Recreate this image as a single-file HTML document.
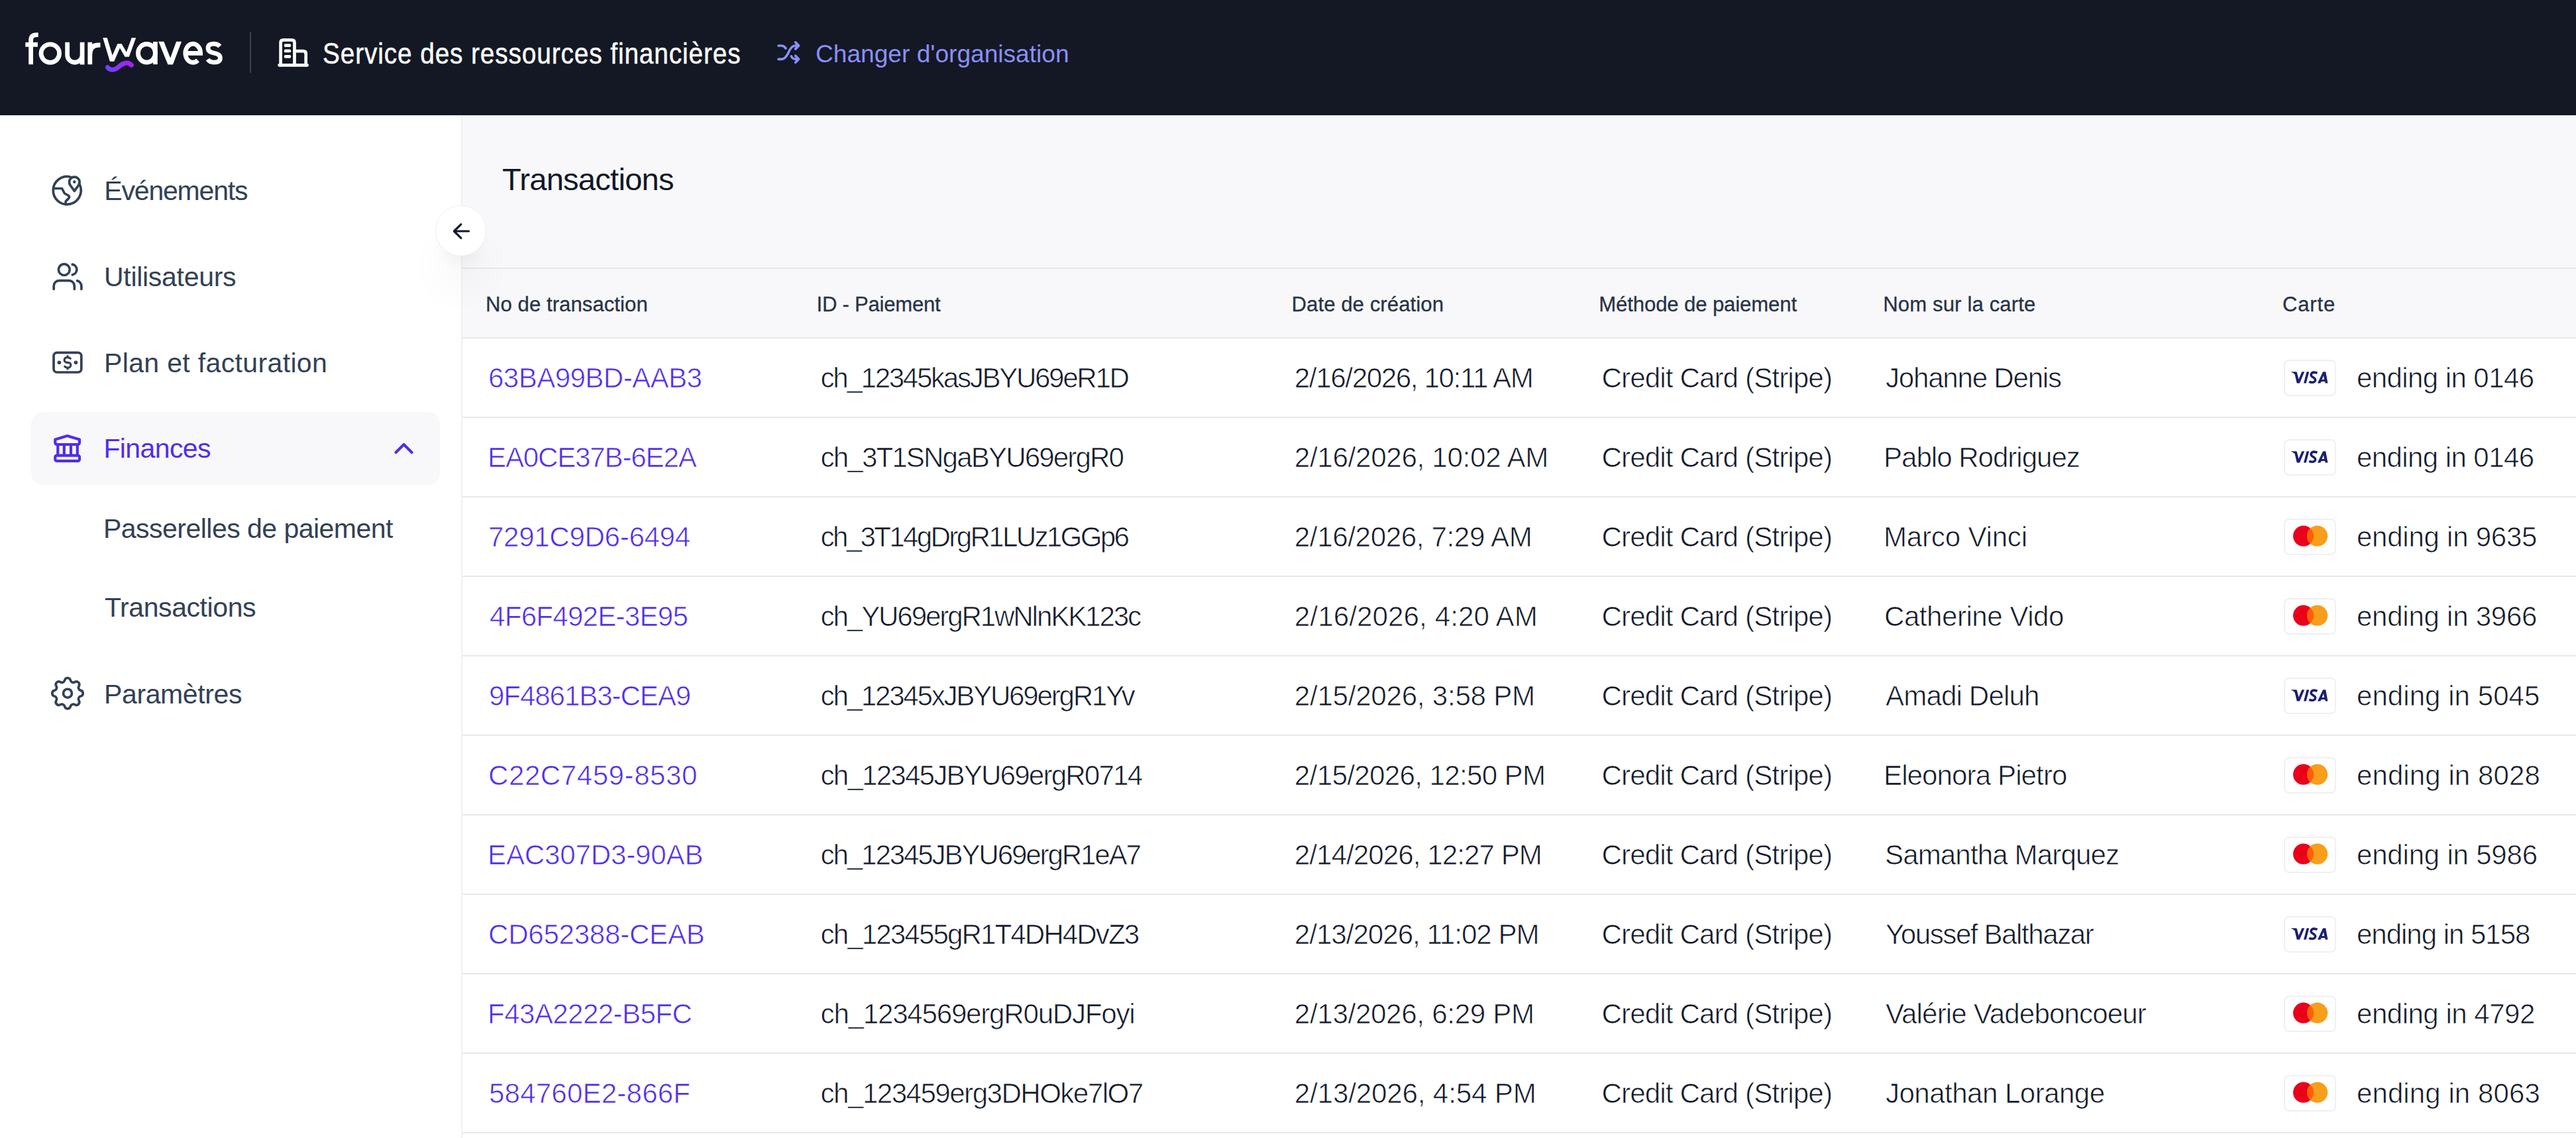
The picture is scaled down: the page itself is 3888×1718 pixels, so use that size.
<!DOCTYPE html>
<html lang="fr">
<head>
<meta charset="utf-8">
<title>Transactions - fourwaves</title>
<style>
html,body{margin:0;padding:0;}
body{width:3888px;height:1718px;position:relative;overflow:hidden;background:#f8f8fa;font-family:"Liberation Sans",sans-serif;}
.t{position:absolute;white-space:nowrap;font-family:"Liberation Sans",sans-serif;}
#hdr{position:absolute;left:0;top:0;width:3888px;height:174px;background:#131824;}
#side{position:absolute;left:0;top:174px;width:696px;height:1544px;background:#ffffff;}
#sideb{position:absolute;left:696px;top:174px;width:2px;height:1544px;background:#eef0f4;}
#active{position:absolute;left:47px;top:622px;width:617px;height:110px;border-radius:18px;background:#f8f8fa;}
#rows{position:absolute;left:698px;top:511px;width:3190px;height:1207px;background:#ffffff;}
.hl{position:absolute;left:698px;width:3190px;height:2px;background:#e6e8ec;}
.badge{position:absolute;left:3447px;width:79px;height:55px;box-sizing:border-box;border:2px solid #eef0f3;border-radius:8px;background:#fff;}
.badge svg{position:absolute;left:-2px;top:-2px;}
#collapse{position:absolute;left:657px;top:310px;width:77px;height:77px;box-sizing:border-box;border-radius:50%;background:#fff;border:1.5px solid #eceef1;box-shadow:0 54px 67px -13px rgba(0,0,0,0.07), 0 22px 27px -16px rgba(0,0,0,0.07);}
#ov{position:absolute;left:0;top:0;}
</style>
</head>
<body>
<div id="hdr"></div>
<div id="side"></div>
<div id="sideb"></div>
<div id="active"></div>
<div id="rows"></div>
<div class="hl" style="top:404px"></div>
<div class="hl" style="top:509px"></div>
<div class="hl" style="top:629px"></div>
<div class="hl" style="top:749px"></div>
<div class="hl" style="top:869px"></div>
<div class="hl" style="top:989px"></div>
<div class="hl" style="top:1109px"></div>
<div class="hl" style="top:1229px"></div>
<div class="hl" style="top:1349px"></div>
<div class="hl" style="top:1469px"></div>
<div class="hl" style="top:1589px"></div>
<div class="hl" style="top:1709px"></div>
<div class="badge" style="top:543px"><svg width="79" height="55" viewBox="0 0 79 55"><g fill="#1a1f71"><path d="M10.4 18.2 H18.6 Q19.6 18.3 19.9 19.6 L22.4 29.6 L27.3 18.2 H31.2 L23.9 35.6 H19.7 L16.6 22.2 Q14.5 19.6 10.4 18.2Z"/><path d="M34.5 18.2 H38.2 L33.7 35.6 H30Z"/><path fill-rule="evenodd" d="M59.1 18.2 H63.2 L66.4 35.6 H62.6 L62.1 32.9 H56.7 L55.2 35.6 H50.9Z M57.5 30 L60 23.9 L61 30Z"/></g><path d="M50.4 20.4 C48.6 19.3 47.3 19.1 45.9 19.1 C42.9 19.1 41.1 20.7 41.1 22.9 C41.1 26.6 47.6 26.9 47.6 30.5 C47.6 33 45.3 34.3 42.6 34.3 C40.8 34.3 39.3 33.7 38.3 33" stroke="#1a1f71" stroke-width="3.6" fill="none"/></svg></div>
<div class="badge" style="top:663px"><svg width="79" height="55" viewBox="0 0 79 55"><g fill="#1a1f71"><path d="M10.4 18.2 H18.6 Q19.6 18.3 19.9 19.6 L22.4 29.6 L27.3 18.2 H31.2 L23.9 35.6 H19.7 L16.6 22.2 Q14.5 19.6 10.4 18.2Z"/><path d="M34.5 18.2 H38.2 L33.7 35.6 H30Z"/><path fill-rule="evenodd" d="M59.1 18.2 H63.2 L66.4 35.6 H62.6 L62.1 32.9 H56.7 L55.2 35.6 H50.9Z M57.5 30 L60 23.9 L61 30Z"/></g><path d="M50.4 20.4 C48.6 19.3 47.3 19.1 45.9 19.1 C42.9 19.1 41.1 20.7 41.1 22.9 C41.1 26.6 47.6 26.9 47.6 30.5 C47.6 33 45.3 34.3 42.6 34.3 C40.8 34.3 39.3 33.7 38.3 33" stroke="#1a1f71" stroke-width="3.6" fill="none"/></svg></div>
<div class="badge" style="top:783px"><svg width="79" height="55" viewBox="0 0 79 55"><circle cx="29.6" cy="26.2" r="15.6" fill="#eb001b"/><circle cx="50.6" cy="26.2" r="15.6" fill="#f79e1b"/><path d="M40.1 14.66 A15.6 15.6 0 0 1 40.1 37.74 A15.6 15.6 0 0 1 40.1 14.66Z" fill="#ff5f00"/></svg></div>
<div class="badge" style="top:903px"><svg width="79" height="55" viewBox="0 0 79 55"><circle cx="29.6" cy="26.2" r="15.6" fill="#eb001b"/><circle cx="50.6" cy="26.2" r="15.6" fill="#f79e1b"/><path d="M40.1 14.66 A15.6 15.6 0 0 1 40.1 37.74 A15.6 15.6 0 0 1 40.1 14.66Z" fill="#ff5f00"/></svg></div>
<div class="badge" style="top:1023px"><svg width="79" height="55" viewBox="0 0 79 55"><g fill="#1a1f71"><path d="M10.4 18.2 H18.6 Q19.6 18.3 19.9 19.6 L22.4 29.6 L27.3 18.2 H31.2 L23.9 35.6 H19.7 L16.6 22.2 Q14.5 19.6 10.4 18.2Z"/><path d="M34.5 18.2 H38.2 L33.7 35.6 H30Z"/><path fill-rule="evenodd" d="M59.1 18.2 H63.2 L66.4 35.6 H62.6 L62.1 32.9 H56.7 L55.2 35.6 H50.9Z M57.5 30 L60 23.9 L61 30Z"/></g><path d="M50.4 20.4 C48.6 19.3 47.3 19.1 45.9 19.1 C42.9 19.1 41.1 20.7 41.1 22.9 C41.1 26.6 47.6 26.9 47.6 30.5 C47.6 33 45.3 34.3 42.6 34.3 C40.8 34.3 39.3 33.7 38.3 33" stroke="#1a1f71" stroke-width="3.6" fill="none"/></svg></div>
<div class="badge" style="top:1143px"><svg width="79" height="55" viewBox="0 0 79 55"><circle cx="29.6" cy="26.2" r="15.6" fill="#eb001b"/><circle cx="50.6" cy="26.2" r="15.6" fill="#f79e1b"/><path d="M40.1 14.66 A15.6 15.6 0 0 1 40.1 37.74 A15.6 15.6 0 0 1 40.1 14.66Z" fill="#ff5f00"/></svg></div>
<div class="badge" style="top:1263px"><svg width="79" height="55" viewBox="0 0 79 55"><circle cx="29.6" cy="26.2" r="15.6" fill="#eb001b"/><circle cx="50.6" cy="26.2" r="15.6" fill="#f79e1b"/><path d="M40.1 14.66 A15.6 15.6 0 0 1 40.1 37.74 A15.6 15.6 0 0 1 40.1 14.66Z" fill="#ff5f00"/></svg></div>
<div class="badge" style="top:1383px"><svg width="79" height="55" viewBox="0 0 79 55"><g fill="#1a1f71"><path d="M10.4 18.2 H18.6 Q19.6 18.3 19.9 19.6 L22.4 29.6 L27.3 18.2 H31.2 L23.9 35.6 H19.7 L16.6 22.2 Q14.5 19.6 10.4 18.2Z"/><path d="M34.5 18.2 H38.2 L33.7 35.6 H30Z"/><path fill-rule="evenodd" d="M59.1 18.2 H63.2 L66.4 35.6 H62.6 L62.1 32.9 H56.7 L55.2 35.6 H50.9Z M57.5 30 L60 23.9 L61 30Z"/></g><path d="M50.4 20.4 C48.6 19.3 47.3 19.1 45.9 19.1 C42.9 19.1 41.1 20.7 41.1 22.9 C41.1 26.6 47.6 26.9 47.6 30.5 C47.6 33 45.3 34.3 42.6 34.3 C40.8 34.3 39.3 33.7 38.3 33" stroke="#1a1f71" stroke-width="3.6" fill="none"/></svg></div>
<div class="badge" style="top:1503px"><svg width="79" height="55" viewBox="0 0 79 55"><circle cx="29.6" cy="26.2" r="15.6" fill="#eb001b"/><circle cx="50.6" cy="26.2" r="15.6" fill="#f79e1b"/><path d="M40.1 14.66 A15.6 15.6 0 0 1 40.1 37.74 A15.6 15.6 0 0 1 40.1 14.66Z" fill="#ff5f00"/></svg></div>
<div class="badge" style="top:1623px"><svg width="79" height="55" viewBox="0 0 79 55"><circle cx="29.6" cy="26.2" r="15.6" fill="#eb001b"/><circle cx="50.6" cy="26.2" r="15.6" fill="#f79e1b"/><path d="M40.1 14.66 A15.6 15.6 0 0 1 40.1 37.74 A15.6 15.6 0 0 1 40.1 14.66Z" fill="#ff5f00"/></svg></div>
<div id="collapse"></div>
<svg id="ov" width="3888" height="1718" viewBox="0 0 3888 1718" fill="none">
  <defs>
    <linearGradient id="wg" x1="160" y1="0" x2="200" y2="0" gradientUnits="userSpaceOnUse">
      <stop offset="0" stop-color="#6a44f7"/><stop offset="1" stop-color="#a81ff2"/>
    </linearGradient>
  </defs>
  <!-- logo -->
  <g stroke="#ffffff" stroke-width="6.8" fill="none">
    <path d="M46.6 97.2 V61 Q46.6 52.6 55 52.6 H57.7"/>
    <path d="M38.3 67.3 H57"/>
    <circle cx="75.8" cy="80.6" r="13.8"/>
    <path d="M101.65 63.7 V83 A11.22 11.22 0 0 0 124.1 83 V63.7 M124.1 83 V97.5"/>
    <path d="M135.8 97.2 V63.7 M135.8 82 Q135.8 68 149 68 H151.5"/>
    <ellipse cx="221.4" cy="80.3" rx="13" ry="13.8"/>
    <path d="M234.4 63 V97.2"/>
    <path d="M279.8 80.3 H302.6 A11.4 14 0 1 0 298.5 91"/>
    <path d="M331.8 70 Q328.5 66.1 322.8 66.1 Q314 66.1 314 72.8 Q314 78.3 322.5 80 Q332.4 81.8 332.4 87.5 Q332.4 94.1 323 94.1 Q316.5 94.1 313.6 89.5"/>
  </g>
  <g fill="#ffffff">
    <polygon points="155.2,57.1 161.7,57.1 172.3,92.5 165.8,92.5"/>
    <polygon points="165.8,92.5 172.3,92.5 183.7,66.3 177.3,66.3"/>
    <polygon points="177.3,66.3 183.7,66.3 194.9,85.4 188.4,85.4"/>
    <polygon points="188.4,85.4 194.9,85.4 205.2,57.1 198.7,57.1"/>
    <polygon points="239.3,62.7 247.3,62.7 260.9,97.2 253.3,97.2"/>
    <polygon points="266.1,62.7 274.1,62.7 261,97.2 253.5,97.2"/>
  </g>
  <path d="M162.5 101.7 C166 106.5 173 106.5 179 101 C185 95.5 193 92 198.3 98.3" stroke="url(#wg)" stroke-width="7" stroke-linecap="round"/>
  <!-- divider -->
  <rect x="377" y="48" width="2" height="62" fill="#394153"/>
  <!-- building icon -->
  <g stroke="#ffffff" stroke-width="4.7" stroke-linecap="round" stroke-linejoin="round">
    <path d="M423.6 98.4 V64.3 Q423.6 60.3 427.6 60.3 H440.5 Q444.5 60.3 444.5 64.3 V98.4"/>
    <path d="M444.5 77.1 H457.7 Q461.7 77.1 461.7 81.1 V98.4"/>
    <path d="M421.6 98.4 H463.6"/>
    <path d="M431 68.7 H437 M431 76.9 H437 M431 85.4 H437"/>
  </g>
  <!-- shuffle icon -->
  <g stroke="#8b8ff8" stroke-width="3.7" stroke-linecap="round" stroke-linejoin="round">
    <path d="M1175 69 H1179.5 Q1183.5 69 1186 73"/>
    <path d="M1175 89.3 H1179.5 Q1185 89.3 1189.5 80.5 Q1194 69 1200 69 H1204.5"/>
    <path d="M1194.3 85 Q1196.5 89.3 1201 89.3 H1204.5"/>
    <path d="M1200.6 63.9 L1205.5 68.9 L1200.6 73.9"/>
    <path d="M1200.6 84.3 L1205.5 89.3 L1200.6 94.3"/>
  </g>
  <!-- sidebar icons -->
  <g stroke="#334155" stroke-width="3.7" stroke-linecap="round" stroke-linejoin="round">
    <!-- globe pin -->
    <path d="M120.4 279 A21 21 0 1 1 106.4 267.2"/>
    <path d="M112.3 288.4 L105.96 279.54 A7.8 7.8 0 1 1 118.64 279.54 Z"/>
    <path d="M81.2 284.5 H93.5 L97.5 292 L103 295 Q105.5 296.8 103.8 299.2 L99.5 303.6 Q98.6 305 99.2 308.5"/>
    <!-- users -->
    <circle cx="96.8" cy="407.1" r="8.4"/>
    <path d="M81.2 436.4 V431.7 A8 8 0 0 1 89.2 423.7 H104.3 A8 8 0 0 1 112.3 431.7 V436.4"/>
    <path d="M109.2 399.2 A7.9 7.9 0 0 1 109.2 414.8"/>
    <path d="M116.5 423.9 A8.5 8.5 0 0 1 122.9 432 V436.4"/>
    <!-- money -->
    <rect x="81" y="532.3" width="41.8" height="29.7" rx="5" stroke-width="3.7"/>
    <path d="M106.3 541.3 Q104.8 539.6 102 539.6 H101 A3.85 3.85 0 0 0 101 547.3 H103 A3.85 3.85 0 0 1 103 555 H102 Q99.2 555 97.7 553.3 M102 537.6 V539.6 M102 555 V557" stroke-width="3.2"/>
    <!-- gear -->
    <path transform="translate(102 1046.7) scale(2.58) translate(-12 -12)" stroke-width="1.43" d="M10.325 4.317c.426 -1.756 2.924 -1.756 3.35 0a1.724 1.724 0 0 0 2.573 1.066c1.543 -.94 3.31 .826 2.37 2.37a1.724 1.724 0 0 0 1.065 2.572c1.756 .426 1.756 2.924 0 3.35a1.724 1.724 0 0 0 -1.066 2.573c.94 1.543 -.826 3.31 -2.37 2.37a1.724 1.724 0 0 0 -2.572 1.065c-.426 1.756 -2.924 1.756 -3.35 0a1.724 1.724 0 0 0 -2.573 -1.066c-1.543 .94 -3.31 -.826 -2.37 -2.37a1.724 1.724 0 0 0 -1.065 -2.572c-1.756 -.426 -1.756 -2.924 0 -3.35a1.724 1.724 0 0 0 1.066 -2.573c-.94 -1.543 .826 -3.31 2.37 -2.37c1 .608 2.296 .07 2.572 -1.065z"/>
    <circle cx="102" cy="1046.7" r="6.45"/>
  </g>
  <g fill="#334155">
    <circle cx="112.3" cy="274.6" r="2.3"/>
    <circle cx="89.4" cy="547.3" r="2.8"/>
    <circle cx="114.4" cy="547.3" r="2.8"/>
  </g>
  <!-- bank icon -->
  <g stroke="#502ded" stroke-width="4.2" stroke-linecap="round" stroke-linejoin="round">
    <path d="M83.3 663.5 L101.5 658 L120 663.5 V668 Q120 671 117 671 H86.3 Q83.3 671 83.3 668 Z"/>
    <path d="M87.3 671 V686.5 M96.8 671 V686.5 M107 671 V686.5 M116.8 671 V686.5"/>
    <rect x="83.3" y="687.6" width="36.7" height="8.3" rx="2.5"/>
    <path d="M597.5 683 L609.5 671 L621.5 683"/>
  </g>
  <!-- arrow in collapse button -->
  <g stroke="#111827" stroke-width="3.2" stroke-linecap="round" stroke-linejoin="round">
    <path d="M707.5 349 H685.5 M695.8 338.6 L685.3 349 L695.8 359.4"/>
  </g>
</svg>
<div class="t" style="left:487.24px;top:58.55px;font-size:44px;line-height:44px;letter-spacing:1.040px;color:#ffffff;font-weight:400;-webkit-text-stroke:0.5px #ffffff;transform:scaleX(0.88);transform-origin:0 0;">Service des ressources financières</div>
<div class="t" style="left:1231.00px;top:62.78px;font-size:37.0px;line-height:37.0px;letter-spacing:0.054px;color:#8b8ff8;font-weight:400;">Changer d'organisation</div>
<div class="t" style="left:157.30px;top:267.79px;font-size:41px;line-height:41px;letter-spacing:-1.189px;color:#334155;font-weight:400;">Événements</div>
<div class="t" style="left:157.00px;top:398.09px;font-size:41px;line-height:41px;letter-spacing:-0.298px;color:#334155;font-weight:400;">Utilisateurs</div>
<div class="t" style="left:157.00px;top:527.79px;font-size:41px;line-height:41px;letter-spacing:0.351px;color:#334155;font-weight:400;">Plan et facturation</div>
<div class="t" style="left:156.40px;top:657.49px;font-size:41px;line-height:41px;letter-spacing:-0.609px;color:#502ded;font-weight:400;">Finances</div>
<div class="t" style="left:156.00px;top:777.79px;font-size:41px;line-height:41px;letter-spacing:-0.527px;color:#334155;font-weight:400;">Passerelles de paiement</div>
<div class="t" style="left:158.00px;top:897.29px;font-size:41px;line-height:41px;letter-spacing:-0.426px;color:#334155;font-weight:400;">Transactions</div>
<div class="t" style="left:157.00px;top:1027.79px;font-size:41px;line-height:41px;letter-spacing:-0.379px;color:#334155;font-weight:400;">Paramètres</div>
<div class="t" style="left:758.00px;top:247.11px;font-size:47px;line-height:47px;letter-spacing:-0.710px;color:#111827;font-weight:400;">Transactions</div>
<div class="t" style="left:733.00px;top:444.46px;font-size:31px;line-height:31px;letter-spacing:0.104px;color:#273244;font-weight:400;-webkit-text-stroke:0.3px #273244;">No de transaction</div>
<div class="t" style="left:1232.50px;top:444.46px;font-size:31px;line-height:31px;letter-spacing:-0.200px;color:#273244;font-weight:400;-webkit-text-stroke:0.3px #273244;">ID - Paiement</div>
<div class="t" style="left:1949.50px;top:444.46px;font-size:31px;line-height:31px;letter-spacing:0.131px;color:#273244;font-weight:400;-webkit-text-stroke:0.3px #273244;">Date de création</div>
<div class="t" style="left:2413.30px;top:444.46px;font-size:31px;line-height:31px;letter-spacing:-0.064px;color:#273244;font-weight:400;-webkit-text-stroke:0.3px #273244;">Méthode de paiement</div>
<div class="t" style="left:2842.30px;top:444.46px;font-size:31px;line-height:31px;letter-spacing:0.169px;color:#273244;font-weight:400;-webkit-text-stroke:0.3px #273244;">Nom sur la carte</div>
<div class="t" style="left:3444.90px;top:444.46px;font-size:31px;line-height:31px;letter-spacing:0.884px;color:#273244;font-weight:400;-webkit-text-stroke:0.3px #273244;">Carte</div>
<div class="t" style="left:737.00px;top:550.45px;font-size:42px;line-height:42px;letter-spacing:-0.519px;color:#502ded;font-weight:400;-webkit-text-stroke:0.7px #ffffff;">63BA99BD-AAB3</div>
<div class="t" style="left:1238.60px;top:550.45px;font-size:42px;line-height:42px;letter-spacing:-2.255px;color:#111827;font-weight:400;-webkit-text-stroke:0.7px #ffffff;">ch_12345kasJBYU69eR1D</div>
<div class="t" style="left:1953.80px;top:550.45px;font-size:42px;line-height:42px;letter-spacing:-1.314px;color:#111827;font-weight:400;-webkit-text-stroke:0.7px #ffffff;">2/16/2026, 10:11 AM</div>
<div class="t" style="left:2417.50px;top:550.45px;font-size:42px;line-height:42px;letter-spacing:-0.827px;color:#111827;font-weight:400;-webkit-text-stroke:0.7px #ffffff;">Credit Card (Stripe)</div>
<div class="t" style="left:2846.00px;top:550.45px;font-size:42px;line-height:42px;letter-spacing:-1.183px;color:#111827;font-weight:400;-webkit-text-stroke:0.7px #ffffff;">Johanne Denis</div>
<div class="t" style="left:3557.00px;top:550.45px;font-size:42px;line-height:42px;letter-spacing:-0.579px;color:#111827;font-weight:400;-webkit-text-stroke:0.7px #ffffff;">ending in 0146</div>
<div class="t" style="left:736.00px;top:670.45px;font-size:42px;line-height:42px;letter-spacing:-1.123px;color:#502ded;font-weight:400;-webkit-text-stroke:0.7px #ffffff;">EA0CE37B-6E2A</div>
<div class="t" style="left:1238.60px;top:670.45px;font-size:42px;line-height:42px;letter-spacing:-1.803px;color:#111827;font-weight:400;-webkit-text-stroke:0.7px #ffffff;">ch_3T1SNgaBYU69ergR0</div>
<div class="t" style="left:1953.80px;top:670.45px;font-size:42px;line-height:42px;letter-spacing:-0.237px;color:#111827;font-weight:400;-webkit-text-stroke:0.7px #ffffff;">2/16/2026, 10:02 AM</div>
<div class="t" style="left:2417.50px;top:670.45px;font-size:42px;line-height:42px;letter-spacing:-0.827px;color:#111827;font-weight:400;-webkit-text-stroke:0.7px #ffffff;">Credit Card (Stripe)</div>
<div class="t" style="left:2843.00px;top:670.45px;font-size:42px;line-height:42px;letter-spacing:-0.981px;color:#111827;font-weight:400;-webkit-text-stroke:0.7px #ffffff;">Pablo Rodriguez</div>
<div class="t" style="left:3557.00px;top:670.45px;font-size:42px;line-height:42px;letter-spacing:-0.579px;color:#111827;font-weight:400;-webkit-text-stroke:0.7px #ffffff;">ending in 0146</div>
<div class="t" style="left:737.00px;top:790.45px;font-size:42px;line-height:42px;letter-spacing:-0.265px;color:#502ded;font-weight:400;-webkit-text-stroke:0.7px #ffffff;">7291C9D6-6494</div>
<div class="t" style="left:1238.60px;top:790.45px;font-size:42px;line-height:42px;letter-spacing:-2.601px;color:#111827;font-weight:400;-webkit-text-stroke:0.7px #ffffff;">ch_3T14gDrgR1LUz1GGp6</div>
<div class="t" style="left:1953.80px;top:790.45px;font-size:42px;line-height:42px;letter-spacing:-0.318px;color:#111827;font-weight:400;-webkit-text-stroke:0.7px #ffffff;">2/16/2026, 7:29 AM</div>
<div class="t" style="left:2417.50px;top:790.45px;font-size:42px;line-height:42px;letter-spacing:-0.827px;color:#111827;font-weight:400;-webkit-text-stroke:0.7px #ffffff;">Credit Card (Stripe)</div>
<div class="t" style="left:2843.00px;top:790.45px;font-size:42px;line-height:42px;letter-spacing:-0.160px;color:#111827;font-weight:400;-webkit-text-stroke:0.7px #ffffff;">Marco Vinci</div>
<div class="t" style="left:3557.00px;top:790.45px;font-size:42px;line-height:42px;letter-spacing:-0.248px;color:#111827;font-weight:400;-webkit-text-stroke:0.7px #ffffff;">ending in 9635</div>
<div class="t" style="left:739.00px;top:910.45px;font-size:42px;line-height:42px;letter-spacing:-0.694px;color:#502ded;font-weight:400;-webkit-text-stroke:0.7px #ffffff;">4F6F492E-3E95</div>
<div class="t" style="left:1238.60px;top:910.45px;font-size:42px;line-height:42px;letter-spacing:-2.058px;color:#111827;font-weight:400;-webkit-text-stroke:0.7px #ffffff;">ch_YU69ergR1wNlnKK123c</div>
<div class="t" style="left:1953.80px;top:910.45px;font-size:42px;line-height:42px;letter-spacing:0.152px;color:#111827;font-weight:400;-webkit-text-stroke:0.7px #ffffff;">2/16/2026, 4:20 AM</div>
<div class="t" style="left:2417.50px;top:910.45px;font-size:42px;line-height:42px;letter-spacing:-0.827px;color:#111827;font-weight:400;-webkit-text-stroke:0.7px #ffffff;">Credit Card (Stripe)</div>
<div class="t" style="left:2844.00px;top:910.45px;font-size:42px;line-height:42px;letter-spacing:-0.440px;color:#111827;font-weight:400;-webkit-text-stroke:0.7px #ffffff;">Catherine Vido</div>
<div class="t" style="left:3557.00px;top:910.45px;font-size:42px;line-height:42px;letter-spacing:-0.248px;color:#111827;font-weight:400;-webkit-text-stroke:0.7px #ffffff;">ending in 3966</div>
<div class="t" style="left:738.00px;top:1030.45px;font-size:42px;line-height:42px;letter-spacing:-1.039px;color:#502ded;font-weight:400;-webkit-text-stroke:0.7px #ffffff;">9F4861B3-CEA9</div>
<div class="t" style="left:1238.60px;top:1030.45px;font-size:42px;line-height:42px;letter-spacing:-2.180px;color:#111827;font-weight:400;-webkit-text-stroke:0.7px #ffffff;">ch_12345xJBYU69ergR1Yv</div>
<div class="t" style="left:1953.80px;top:1030.45px;font-size:42px;line-height:42px;letter-spacing:-0.201px;color:#111827;font-weight:400;-webkit-text-stroke:0.7px #ffffff;">2/15/2026, 3:58 PM</div>
<div class="t" style="left:2417.50px;top:1030.45px;font-size:42px;line-height:42px;letter-spacing:-0.827px;color:#111827;font-weight:400;-webkit-text-stroke:0.7px #ffffff;">Credit Card (Stripe)</div>
<div class="t" style="left:2846.00px;top:1030.45px;font-size:42px;line-height:42px;letter-spacing:-0.810px;color:#111827;font-weight:400;-webkit-text-stroke:0.7px #ffffff;">Amadi Deluh</div>
<div class="t" style="left:3557.00px;top:1030.45px;font-size:42px;line-height:42px;letter-spacing:0.060px;color:#111827;font-weight:400;-webkit-text-stroke:0.7px #ffffff;">ending in 5045</div>
<div class="t" style="left:737.00px;top:1150.45px;font-size:42px;line-height:42px;letter-spacing:0.594px;color:#502ded;font-weight:400;-webkit-text-stroke:0.7px #ffffff;">C22C7459-8530</div>
<div class="t" style="left:1238.60px;top:1150.45px;font-size:42px;line-height:42px;letter-spacing:-1.743px;color:#111827;font-weight:400;-webkit-text-stroke:0.7px #ffffff;">ch_12345JBYU69ergR0714</div>
<div class="t" style="left:1953.80px;top:1150.45px;font-size:42px;line-height:42px;letter-spacing:-0.598px;color:#111827;font-weight:400;-webkit-text-stroke:0.7px #ffffff;">2/15/2026, 12:50 PM</div>
<div class="t" style="left:2417.50px;top:1150.45px;font-size:42px;line-height:42px;letter-spacing:-0.827px;color:#111827;font-weight:400;-webkit-text-stroke:0.7px #ffffff;">Credit Card (Stripe)</div>
<div class="t" style="left:2843.00px;top:1150.45px;font-size:42px;line-height:42px;letter-spacing:-0.868px;color:#111827;font-weight:400;-webkit-text-stroke:0.7px #ffffff;">Eleonora Pietro</div>
<div class="t" style="left:3557.00px;top:1150.45px;font-size:42px;line-height:42px;letter-spacing:0.090px;color:#111827;font-weight:400;-webkit-text-stroke:0.7px #ffffff;">ending in 8028</div>
<div class="t" style="left:736.00px;top:1270.45px;font-size:42px;line-height:42px;letter-spacing:-0.112px;color:#502ded;font-weight:400;-webkit-text-stroke:0.7px #ffffff;">EAC307D3-90AB</div>
<div class="t" style="left:1238.60px;top:1270.45px;font-size:42px;line-height:42px;letter-spacing:-2.069px;color:#111827;font-weight:400;-webkit-text-stroke:0.7px #ffffff;">ch_12345JBYU69ergR1eA7</div>
<div class="t" style="left:1953.80px;top:1270.45px;font-size:42px;line-height:42px;letter-spacing:-0.887px;color:#111827;font-weight:400;-webkit-text-stroke:0.7px #ffffff;">2/14/2026, 12:27 PM</div>
<div class="t" style="left:2417.50px;top:1270.45px;font-size:42px;line-height:42px;letter-spacing:-0.827px;color:#111827;font-weight:400;-webkit-text-stroke:0.7px #ffffff;">Credit Card (Stripe)</div>
<div class="t" style="left:2845.00px;top:1270.45px;font-size:42px;line-height:42px;letter-spacing:-0.836px;color:#111827;font-weight:400;-webkit-text-stroke:0.7px #ffffff;">Samantha Marquez</div>
<div class="t" style="left:3557.00px;top:1270.45px;font-size:42px;line-height:42px;letter-spacing:-0.194px;color:#111827;font-weight:400;-webkit-text-stroke:0.7px #ffffff;">ending in 5986</div>
<div class="t" style="left:737.00px;top:1390.45px;font-size:42px;line-height:42px;letter-spacing:-0.205px;color:#502ded;font-weight:400;-webkit-text-stroke:0.7px #ffffff;">CD652388-CEAB</div>
<div class="t" style="left:1238.60px;top:1390.45px;font-size:42px;line-height:42px;letter-spacing:-1.837px;color:#111827;font-weight:400;-webkit-text-stroke:0.7px #ffffff;">ch_123455gR1T4DH4DvZ3</div>
<div class="t" style="left:1953.80px;top:1390.45px;font-size:42px;line-height:42px;letter-spacing:-0.953px;color:#111827;font-weight:400;-webkit-text-stroke:0.7px #ffffff;">2/13/2026, 11:02 PM</div>
<div class="t" style="left:2417.50px;top:1390.45px;font-size:42px;line-height:42px;letter-spacing:-0.827px;color:#111827;font-weight:400;-webkit-text-stroke:0.7px #ffffff;">Credit Card (Stripe)</div>
<div class="t" style="left:2846.00px;top:1390.45px;font-size:42px;line-height:42px;letter-spacing:-1.395px;color:#111827;font-weight:400;-webkit-text-stroke:0.7px #ffffff;">Youssef Balthazar</div>
<div class="t" style="left:3557.00px;top:1390.45px;font-size:42px;line-height:42px;letter-spacing:-1.017px;color:#111827;font-weight:400;-webkit-text-stroke:0.7px #ffffff;">ending in 5158</div>
<div class="t" style="left:736.00px;top:1510.45px;font-size:42px;line-height:42px;letter-spacing:-0.528px;color:#502ded;font-weight:400;-webkit-text-stroke:0.7px #ffffff;">F43A2222-B5FC</div>
<div class="t" style="left:1238.60px;top:1510.45px;font-size:42px;line-height:42px;letter-spacing:-1.172px;color:#111827;font-weight:400;-webkit-text-stroke:0.7px #ffffff;">ch_1234569ergR0uDJFoyi</div>
<div class="t" style="left:1953.80px;top:1510.45px;font-size:42px;line-height:42px;letter-spacing:-0.259px;color:#111827;font-weight:400;-webkit-text-stroke:0.7px #ffffff;">2/13/2026, 6:29 PM</div>
<div class="t" style="left:2417.50px;top:1510.45px;font-size:42px;line-height:42px;letter-spacing:-0.827px;color:#111827;font-weight:400;-webkit-text-stroke:0.7px #ffffff;">Credit Card (Stripe)</div>
<div class="t" style="left:2846.00px;top:1510.45px;font-size:42px;line-height:42px;letter-spacing:-0.822px;color:#111827;font-weight:400;-webkit-text-stroke:0.7px #ffffff;">Valérie Vadeboncoeur</div>
<div class="t" style="left:3557.00px;top:1510.45px;font-size:42px;line-height:42px;letter-spacing:-0.479px;color:#111827;font-weight:400;-webkit-text-stroke:0.7px #ffffff;">ending in 4792</div>
<div class="t" style="left:738.00px;top:1630.45px;font-size:42px;line-height:42px;letter-spacing:0.226px;color:#502ded;font-weight:400;-webkit-text-stroke:0.7px #ffffff;">584760E2-866F</div>
<div class="t" style="left:1238.60px;top:1630.45px;font-size:42px;line-height:42px;letter-spacing:-1.470px;color:#111827;font-weight:400;-webkit-text-stroke:0.7px #ffffff;">ch_123459erg3DHOke7lO7</div>
<div class="t" style="left:1953.80px;top:1630.45px;font-size:42px;line-height:42px;letter-spacing:-0.101px;color:#111827;font-weight:400;-webkit-text-stroke:0.7px #ffffff;">2/13/2026, 4:54 PM</div>
<div class="t" style="left:2417.50px;top:1630.45px;font-size:42px;line-height:42px;letter-spacing:-0.827px;color:#111827;font-weight:400;-webkit-text-stroke:0.7px #ffffff;">Credit Card (Stripe)</div>
<div class="t" style="left:2846.00px;top:1630.45px;font-size:42px;line-height:42px;letter-spacing:-0.504px;color:#111827;font-weight:400;-webkit-text-stroke:0.7px #ffffff;">Jonathan Lorange</div>
<div class="t" style="left:3557.00px;top:1630.45px;font-size:42px;line-height:42px;letter-spacing:0.090px;color:#111827;font-weight:400;-webkit-text-stroke:0.7px #ffffff;">ending in 8063</div>
</body>
</html>
